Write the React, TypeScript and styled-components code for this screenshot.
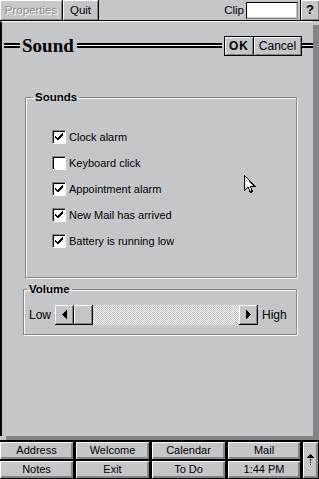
import styled, { createGlobalStyle } from "styled-components";

const GREY = "#c4c6ca";
const DARK = "#83858a";

const GlobalStyle = createGlobalStyle`
  html, body { margin: 0; padding: 0; }
  body {
    background: ${GREY};
    font-family: "Liberation Sans", Arial, sans-serif;
  }
  * { box-sizing: border-box; }
`;

const Screen = styled.div`
  position: relative;
  width: 319px;
  height: 479px;
  display: flex;
  flex-direction: column;
  background: ${GREY};
  overflow: hidden;
`;

/* top menu strip */
const TopBar = styled.div`
  display: flex;
  align-items: stretch;
  height: 21px;
  border-bottom: 1px solid #000;
`;

const MenuButton = styled.div<{ $w: number; $disabled?: boolean }>`
  width: ${(p) => p.$w}px;
  border-right: 1px solid #000;
  box-shadow: inset 1px 1px 0 #fff, inset -1px -1px 0 ${DARK};
  font-size: 11.5px;
  line-height: 20px;
  text-align: center;
  color: ${(p) => (p.$disabled ? "#8c8e92" : "#000")};
  text-shadow: ${(p) => (p.$disabled ? "1px 1px 0 #fff" : "none")};
`;

const Spacer = styled.div`
  flex: 1;
`;

const ClipLabel = styled.span`
  font-size: 11.5px;
  line-height: 20px;
  margin-right: 2px;
`;

const ClipField = styled.div`
  width: 52px;
  height: 17px;
  margin: 2px 2px 0 0;
  background: #fff;
  border: 1px solid;
  border-color: #000 ${DARK} ${DARK} #000;
  box-shadow: inset -1px -1px 0 ${GREY};
`;

const HelpButton = styled.div`
  width: 19px;
  border-left: 1px solid #000;
  box-shadow: inset 1px 1px 0 #fff, inset -1px -1px 0 ${DARK};
  font-size: 13px;
  font-weight: bold;
  line-height: 20px;
  text-align: center;
`;

/* dialog window */
const Desk = styled.div`
  flex: 1;
  display: flex;
  padding: 0 6px 4px 0;
`;

const Window = styled.div`
  flex: 1;
  display: flex;
  flex-direction: column;
  padding-top: 13px;
  border-left: 2px solid #000;
  border-top: 1px solid #fff;
  background: ${GREY};
  box-shadow: 6px 4px 0 ${DARK};
`;

const TitleRow = styled.div`
  display: flex;
  align-items: center;
  height: 21px;
  padding-left: 2px;
`;

const Rule = styled.div<{ $w?: number }>`
  ${(p) => (p.$w ? `width: ${p.$w}px;` : "flex: 1;")}
  height: 5px;
  border-top: 2px solid #000;
  border-bottom: 2px solid #000;
  background: #fff;
`;

const Title = styled.h1`
  margin: 0;
  padding: 0 3px 0 2px;
  font-family: "Liberation Serif", "Times New Roman", serif;
  font-size: 19px;
  font-weight: bold;
  line-height: 21px;
`;

const DialogButtons = styled.div`
  display: flex;
  height: 20px;
  margin-left: 2px;
  border: 1px solid #000;
`;

const DialogButton = styled.div<{ $w: number; $bold?: boolean }>`
  width: ${(p) => p.$w}px;
  box-shadow: inset 1px 1px 0 #fff, inset -1px -1px 0 ${DARK};
  font-size: 12px;
  font-weight: ${(p) => (p.$bold ? "bold" : "normal")};
  letter-spacing: ${(p) => (p.$bold ? "1px" : "0")};
  line-height: 18px;
  text-align: center;
  & + & {
    border-left: 1px solid #000;
  }
`;

const Group = styled.fieldset<{ $left: number; $top: number }>`
  margin: ${(p) => p.$top}px 16px 0 ${(p) => p.$left}px;
  border: 1px solid ${DARK};
  box-shadow: 1px 1px 0 #fff, inset 1px 1px 0 #fff;
  min-width: 0;
`;

const Legend = styled.legend<{ $offset: number }>`
  margin-left: ${(p) => p.$offset}px;
  padding: 0 2px;
  font-size: 11.5px;
  font-weight: bold;
  line-height: 14px;
`;

const SoundList = styled(Group)`
  padding: 26px 0 30px 26px;
  display: flex;
  flex-direction: column;
  gap: 13px;
`;

const CheckRow = styled.label`
  display: flex;
  align-items: center;
  gap: 3px;
  height: 13px;
  font-size: 11px;
`;

const Box = styled.span`
  display: inline-flex;
  align-items: center;
  justify-content: center;
  width: 14px;
  height: 14px;
  background: #fff;
  border: 1px solid;
  border-color: ${DARK} #fff #fff ${DARK};
  box-shadow: inset 1px 1px 0 #000;
`;

const VolumeGroup = styled(Group)`
  padding: 9px 0 9px 5px;
  display: flex;
  align-items: center;
`;

const EndLabel = styled.span<{ $gap: string }>`
  font-size: 12px;
  margin: ${(p) => p.$gap};
`;

const ScrollBar = styled.div`
  display: flex;
  width: 203px;
  height: 20px;
`;

const ScrollButton = styled.div<{ $w: number }>`
  width: ${(p) => p.$w}px;
  display: flex;
  align-items: center;
  justify-content: center;
  background: ${GREY};
  border-right: 1px solid #000;
  border-bottom: 1px solid #000;
  box-shadow: inset 1px 1px 0 #fff, inset -1px -1px 0 ${DARK};
`;

const Track = styled.div`
  flex: 1;
  background: repeating-conic-gradient(#fff 0 25%, #b9bbbf 0 50%) 0 0 / 2px 2px;
`;

const Cursor = styled.svg`
  position: absolute;
  left: 244px;
  top: 175px;
`;

/* launcher strip */
const BottomBar = styled.div`
  display: grid;
  grid-template-columns: 73px 73px 73px 72px 15px;
  grid-template-rows: 17px 17px;
  column-gap: 3px;
  row-gap: 2px;
  height: 39px;
  padding: 2px 0 1px 0;
  background: #000;
`;

const LaunchButton = styled.div`
  background: ${GREY};
  box-shadow: inset 1px 1px 0 #fff, inset -2px -2px 0 ${DARK};
  font-size: 11px;
  line-height: 16px;
  text-align: center;
`;

const ScrollUp = styled(LaunchButton)`
  grid-column: 5;
  grid-row: 1 / span 2;
  display: flex;
  align-items: center;
  justify-content: center;
`;

const sounds = [
  { label: "Clock alarm", on: true },
  { label: "Keyboard click", on: false },
  { label: "Appointment alarm", on: true },
  { label: "New Mail has arrived", on: true },
  { label: "Battery is running low", on: true },
];

const launchers = ["Address", "Welcome", "Calendar", "Mail", "Notes", "Exit", "To Do", "1:44 PM"];

function Check() {
  return (
    <svg width="9" height="8" viewBox="0 0 9 8" shapeRendering="crispEdges">
      <path d="M0 3h1v1h1v1h1V4h1V3h1V2h1V1h1V0h1v3h-1v1h-1v1h-1v1h-1v1h-1v1H3V7H2V6H1V5H0z" fill="#000" />
    </svg>
  );
}

function Arrow({ dir }: { dir: "left" | "right" }) {
  return (
    <svg width="5" height="9" viewBox="0 0 5 9" shapeRendering="crispEdges">
      <path d={dir === "left" ? "M5 0v9L0 4.5z" : "M0 0v9l5-4.5z"} fill="#000" />
    </svg>
  );
}

export default function App() {
  return (
    <>
      <GlobalStyle />
      <Screen>
        <TopBar>
          <MenuButton $w={63} $disabled>
            Properties
          </MenuButton>
          <MenuButton $w={36}>Quit</MenuButton>
          <Spacer />
          <ClipLabel>Clip</ClipLabel>
          <ClipField />
          <HelpButton>?</HelpButton>
        </TopBar>

        <Desk>
          <Window>
            <TitleRow>
              <Rule $w={16} />
              <Title>Sound</Title>
              <Rule />
              <DialogButtons>
                <DialogButton $w={28} $bold>
                  OK
                </DialogButton>
                <DialogButton $w={48}>Cancel</DialogButton>
              </DialogButtons>
              <Rule $w={11} />
            </TitleRow>

            <SoundList $left={23} $top={34}>
              <Legend $offset={-19}>Sounds</Legend>
              {sounds.map((s) => (
                <CheckRow key={s.label}>
                  <Box>{s.on && <Check />}</Box>
                  {s.label}
                </CheckRow>
              ))}
            </SoundList>

            <VolumeGroup $left={21} $top={4}>
              <Legend $offset={-2}>Volume</Legend>
              <EndLabel $gap="0 4px 0 0">Low</EndLabel>
              <ScrollBar>
                <ScrollButton $w={19}>
                  <Arrow dir="left" />
                </ScrollButton>
                <ScrollButton $w={19} />
                <Track />
                <ScrollButton $w={19}>
                  <Arrow dir="right" />
                </ScrollButton>
              </ScrollBar>
              <EndLabel $gap="0 0 0 4px">High</EndLabel>
            </VolumeGroup>
          </Window>
        </Desk>

        <BottomBar>
          {launchers.slice(0, 4).map((l) => (
            <LaunchButton key={l}>{l}</LaunchButton>
          ))}
          <ScrollUp>
            <svg width="7" height="12" viewBox="0 0 7 12" shapeRendering="crispEdges">
              <path d="M3 0h1v1h1v1h1v1h1v1H0V3h1V2h1V1h1z" fill="#000" />
              <rect x="3" y="5" width="1" height="2" fill="#000" />
              <rect x="3" y="8" width="1" height="1" fill="#000" />
              <rect x="3" y="10" width="1" height="1" fill="#000" />
            </svg>
          </ScrollUp>
          {launchers.slice(4).map((l) => (
            <LaunchButton key={l}>{l}</LaunchButton>
          ))}
        </BottomBar>

        <Cursor width="12" height="19" viewBox="0 0 12 19" shapeRendering="crispEdges">
          <path
            d="M0.5 0.5V15.5L4 12L6.5 17.5L8.5 16.5L6 11H10.5Z"
            fill="#fff"
            stroke="#000"
            strokeWidth="1"
          />
        </Cursor>
      </Screen>
    </>
  );
}
